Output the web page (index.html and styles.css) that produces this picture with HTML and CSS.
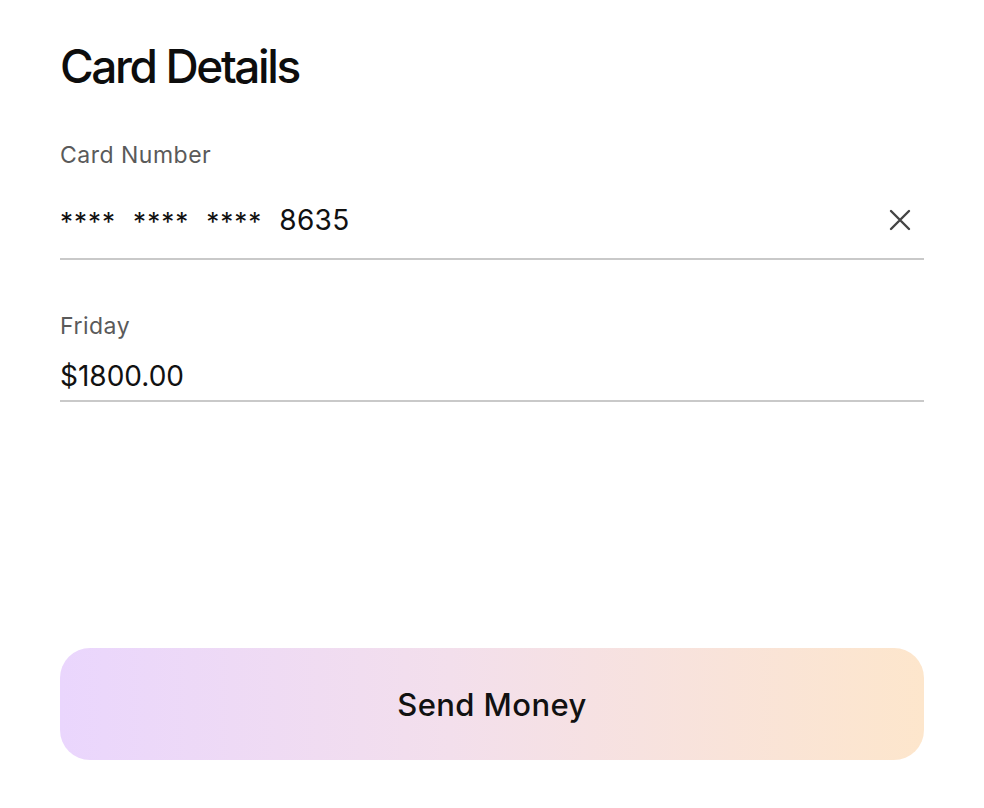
FILE: index.html
```html
<!DOCTYPE html>
<html>
<head>
<meta charset="utf-8">
<link rel="stylesheet" href="styles.css">
</head>
<body>
<main class="page">
  <h1 class="title">Card Details</h1>
  <div class="field field-card">
    <label class="label">Card Number</label>
    <div class="input-row">
      <span class="value card-value"><span class="stars">****</span><span class="stars">****</span><span class="stars">****</span><span class="digits">8635</span></span>
      <svg class="clear" width="24" height="24" viewBox="0 0 24 24" aria-hidden="true">
        <path d="M3 3 L21 21 M21 3 L3 21" stroke="#444" stroke-width="2.4" stroke-linecap="round" fill="none"/>
      </svg>
    </div>
  </div>
  <div class="field field-amount">
    <label class="label">Friday</label>
    <div class="input-row">
      <span class="value">$1800.00</span>
    </div>
  </div>
  <div class="spacer"></div>
  <button class="send">Send Money</button>
</main>
</body>
</html>
```
FILE: styles.css
```css
* { box-sizing: border-box; }
html, body { margin: 0; padding: 0; background: #fff; }
body { font-family: Inter, "Noto Sans", sans-serif; color: #111; }
.page {
  width: 984px;
  height: 808px;
  padding: 38px 60px 48px;
  display: flex;
  flex-direction: column;
}
.title {
  margin: 0;
  font-size: 46px;
  font-weight: 500;
  letter-spacing: -2.4px;
  line-height: 56px;
  color: #0d0d0d;
}
.field { display: flex; flex-direction: column; }
.field-card { margin-top: 46px; }
.field-amount { margin-top: 51px; }
.label {
  font-size: 23px;
  letter-spacing: 0.5px;
  line-height: 30px;
  color: #5a5a5a;
}
.input-row {
  display: flex;
  align-items: center;
  justify-content: space-between;
  border-bottom: 2px solid #c9c9c9;
}
.field-card .input-row { height: 90px; padding-top: 12px; }
.field-amount .input-row { height: 61px; align-items: flex-end; padding-bottom: 6px; }
.value {
  font-size: 28px;
  color: #111;
  line-height: 36px;
}
.card-value { display: flex; gap: 17px; align-items: center; }
.stars { font-size: 26px; letter-spacing: 1px; line-height: 36px; padding-top: 4px; }
.digits { letter-spacing: 0.3px; }
.clear { margin-right: 12px; }
.spacer { flex: 1; }
.send {
  height: 112px;
  width: 100%;
  border: none;
  border-radius: 30px;
  background: linear-gradient(90deg, #ead6fd 0%, #f3dfec 45%, #fde6cc 100%);
  font-family: Inter, "Noto Sans", sans-serif;
  font-size: 31px;
  font-weight: 500;
  color: #111;
  letter-spacing: 0.4px;
}
```
